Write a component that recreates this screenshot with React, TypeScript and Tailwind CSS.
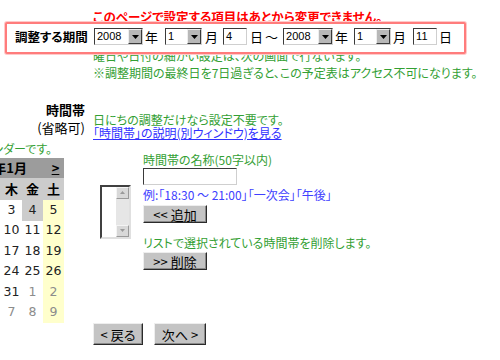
import type { ReactNode } from "react";

const Sel = ({ v, w }: { v: string; w: string }) => (
	<div className={`${w} h-[17px] flex border border-t-[#3a3a3a] border-l-[#3a3a3a] border-r-[#cfcfcf] border-b-[#cfcfcf] bg-white`}>
		<span className="flex-1 pl-[2px] text-[11px] leading-[15px] font-['Liberation_Sans',sans-serif] text-black">{v}</span>
		<span className="w-[14px] h-full bg-[#b8b8b8] border border-t-[#eeeeee] border-l-[#eeeeee] border-r-[#3a3a3a] border-b-[#3a3a3a] flex items-center justify-center">
			<svg width="7" height="4" viewBox="0 0 7 4">
				<path d="M0 0h7L3.5 4z" fill="#000" />
			</svg>
		</span>
	</div>
);

const Inp = ({ v, w }: { v: string; w: string }) => (
	<div className={`${w} h-[17px] border border-t-[#3a3a3a] border-l-[#3a3a3a] border-r-[#cfcfcf] border-b-[#cfcfcf] bg-white pl-[2px] text-[11px] leading-[15px] font-['Liberation_Sans',sans-serif] text-black`}>
		{v}
	</div>
);

const Btn = ({ children, w, h }: { children: ReactNode; w: string; h: string }) => (
	<button className={`${w} ${h} bg-[#c4c4c4] border border-t-[#eeeeee] border-l-[#eeeeee] border-r-[#2a2a2a] border-b-[#2a2a2a] shadow-[inset_-1px_-1px_0_#8a8a8a] flex items-center justify-center text-[13px] leading-none text-black`}>
		{children}
	</button>
);

const weeks = [
	["30", "31", "1", "2", "3", "4", "5"],
	["6", "7", "8", "9", "10", "11", "12"],
	["13", "14", "15", "16", "17", "18", "19"],
	["20", "21", "22", "23", "24", "25", "26"],
	["27", "28", "29", "30", "31", "1", "2"],
	["3", "4", "5", "6", "7", "8", "9"],
];

const isOther = (r: number, c: number) => (r === 0 && c < 2) || (r === 4 && c > 4) || r === 5;

const Calendar = () => (
	<div className="w-[147px] ml-[-83px]">
		<div className="h-[20px] bg-[#9c9c9c] flex items-center text-[13px] font-bold text-black">
			<span className="w-[21px] text-center underline">&lt;</span>
			<span className="w-[105px] text-right pr-[16px]">2008年1月</span>
			<span className="w-[21px] text-center underline pl-[4px]">&gt;</span>
		</div>
		<div className="h-[22px] bg-[#cccccc] grid grid-cols-7 items-center text-[13px] font-bold text-black text-center">
			{["日", "月", "火", "水", "木", "金", "土"].map((d) => (
				<span key={d}>{d}</span>
			))}
		</div>
		{weeks.map((wk, r) => (
			<div key={r} className="h-[20.5px] grid grid-cols-7">
				{wk.map((d, c) => (
					<span
						key={c}
						className={`flex items-center justify-center text-[12.5px] font-['DejaVu_Sans',sans-serif] ${isOther(r, c) ? "text-[#8c8c8c]" : "text-[#222222]"} ${
							c === 6 ? "bg-[#ffffcc]" : r === 0 && c === 5 ? "bg-[#cccccc]" : "bg-white"
						}`}
					>
						{d}
					</span>
				))}
			</div>
		))}
	</div>
);

const ListBox = () => (
	<div className="w-[31px] h-[54px] border-2 border-t-[#404040] border-l-[#404040] border-r-[#e0e0e0] border-b-[#e0e0e0] bg-white flex justify-end">
		<div className="w-[13px] h-full flex flex-col bg-[#e6e6e6]">
			<div className="h-[12px] bg-[#d8d8d8] border border-t-[#f4f4f4] border-l-[#f4f4f4] border-r-[#9a9a9a] border-b-[#9a9a9a] flex items-center justify-center">
				<svg width="5" height="3" viewBox="0 0 5 3">
					<path d="M0 3h5L2.5 0z" fill="#9a9a9a" />
				</svg>
			</div>
			<div className="flex-1" />
			<div className="h-[12px] bg-[#d8d8d8] border border-t-[#f4f4f4] border-l-[#f4f4f4] border-r-[#9a9a9a] border-b-[#9a9a9a] flex items-center justify-center">
				<svg width="5" height="3" viewBox="0 0 5 3">
					<path d="M0 0h5L2.5 3z" fill="#9a9a9a" />
				</svg>
			</div>
		</div>
	</div>
);

const App = () => {
	return (
		<div className="w-[500px] h-[360px] overflow-hidden bg-white relative font-['Noto_Sans_CJK_JP',sans-serif] [font-feature-settings:'palt'] text-[12px] text-black">
			<div className="h-[22px] pt-[10px] pl-[93px] leading-[13px] font-bold text-[12.5px] text-[#ff0000] whitespace-nowrap">このページで設定する項目はあとから変更できません。</div>

			<div className="relative z-10 ml-[5px] w-[461px] h-[32px] border-2 border-[#ff7c7c] rounded-[2px] shadow-[0_0_0_1px_#ffcaca] bg-white flex items-start pt-[4px] pl-[8px] text-[13px] leading-[17px]">
				<span className="w-[79px] font-bold text-[12.5px]">調整する期間</span>
				<Sel v="2008" w="w-[49px]" />
				<span className="ml-[2px]">年</span>
				<span className="ml-[7px]">
					<Sel v="1" w="w-[37px]" />
				</span>
				<span className="ml-[3px]">月</span>
				<span className="ml-[5px]">
					<Inp v="4" w="w-[24px]" />
				</span>
				<span className="ml-[3px]">日</span>
				<span className="ml-[2px]">～</span>
				<span className="ml-[5px]">
					<Sel v="2008" w="w-[50px]" />
				</span>
				<span className="ml-[2px]">年</span>
				<span className="ml-[6px]">
					<Sel v="1" w="w-[37px]" />
				</span>
				<span className="ml-[2px]">月</span>
				<span className="ml-[7px]">
					<Inp v="11" w="w-[24px]" />
				</span>
				<span className="ml-[2px]">日</span>
			</div>

			<div className="mt-[-7px] pl-[93px] leading-[17px] text-[#33a033] whitespace-nowrap">
				<div>曜日や日付の細かい設定は、次の画面で行ないます。</div>
				<div>※調整期間の最終日を7日過ぎると、この予定表はアクセス不可になります。</div>
			</div>

			<div className="flex">
				<div className="w-[88px] shrink-0 overflow-hidden">
					<div className="mt-[22px] pr-[3px] text-right font-bold text-[13px] leading-[14px]">時間帯</div>
					<div className="mt-[3px] pr-[3px] text-right text-[13px] leading-[16px]">(省略可)</div>
					<div className="mt-[6px] flex justify-end pr-[36px] leading-[14px] text-[#33a033] whitespace-nowrap">
						<span className="shrink-0">下はカレンダーです。</span>
					</div>
					<div className="mt-[2px]">
						<Calendar />
					</div>
				</div>

				<div className="ml-[5px] flex-1">
					<div className="mt-[32px] leading-[13px] text-[#33a033] whitespace-nowrap">日にちの調整だけなら設定不要です。</div>
					<a className="block leading-[13px] text-[#3030ff] underline whitespace-nowrap">「時間帯」の説明(別ウィンドウ)を見る</a>

					<div className="mt-[14px] flex items-center">
						<div className="w-[50px] pl-[7px]">
							<ListBox />
						</div>
						<div className="flex flex-col items-start">
							<div className="leading-[14px] text-[#33a033]">時間帯の名称(50字以内)</div>
							<div className="mt-[1px] w-[94px] h-[17px] border border-t-[#3a3a3a] border-l-[#3a3a3a] border-r-[#cfcfcf] border-b-[#cfcfcf] bg-white" />
							<div className="mt-[3px] leading-[14px] text-[#4040ff] whitespace-nowrap">例:「18:30 ～ 21:00」「一次会」「午後」</div>
							<div className="mt-[3px]">
								<Btn w="w-[64px]" h="h-[18px]">
									&lt;&lt; 追加
								</Btn>
							</div>
							<div className="mt-[13px] leading-[14px] text-[#33a033] whitespace-nowrap">リストで選択されている時間帯を削除します。</div>
							<div className="mt-[2px]">
								<Btn w="w-[64px]" h="h-[18px]">
									&gt;&gt; 削除
								</Btn>
							</div>
						</div>
					</div>

					<div className="mt-[53px] flex gap-[11px]">
						<Btn w="w-[50px]" h="h-[22px]">
							&lt; 戻る
						</Btn>
						<Btn w="w-[52px]" h="h-[22px]">
							次へ &gt;
						</Btn>
					</div>
				</div>
			</div>
		</div>
	);
};

export default App;
